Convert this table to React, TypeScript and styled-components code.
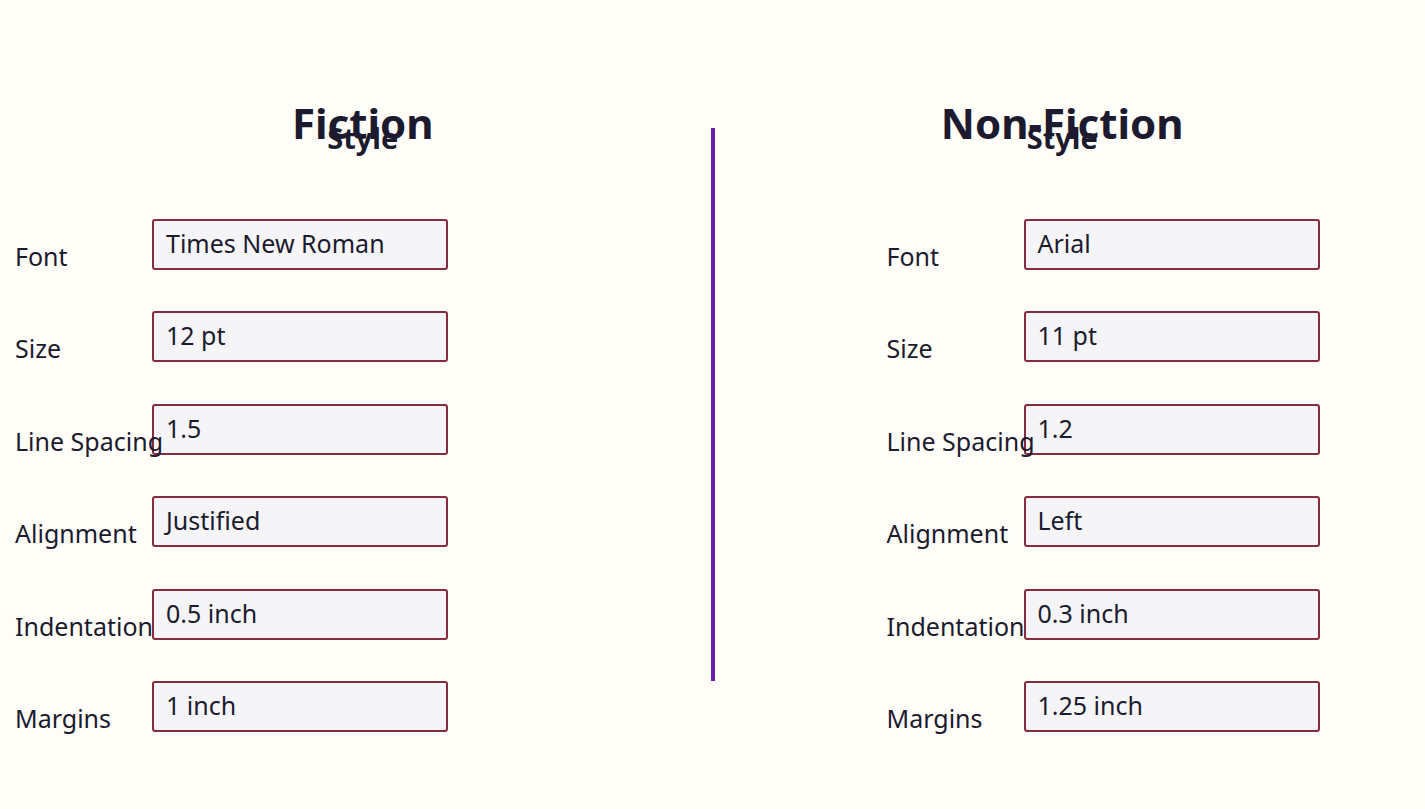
import React from "react";
import styled, { createGlobalStyle } from "styled-components";

interface StyleRow {
  label: string;
  value: string;
}

interface GenreStyle {
  title: string;
  rows: StyleRow[];
}

const genres: GenreStyle[] = [
  {
    title: "Fiction",
    rows: [
      { label: "Font", value: "Times New Roman" },
      { label: "Size", value: "12 pt" },
      { label: "Line Spacing", value: "1.5" },
      { label: "Alignment", value: "Justified" },
      { label: "Indentation", value: "0.5 inch" },
      { label: "Margins", value: "1 inch" },
    ],
  },
  {
    title: "Non-Fiction",
    rows: [
      { label: "Font", value: "Arial" },
      { label: "Size", value: "11 pt" },
      { label: "Line Spacing", value: "1.2" },
      { label: "Alignment", value: "Left" },
      { label: "Indentation", value: "0.3 inch" },
      { label: "Margins", value: "1.25 inch" },
    ],
  },
];

const GlobalStyle = createGlobalStyle`
  * { box-sizing: border-box; }
  body {
    margin: 0;
    background: #fffdf8;
    font-family: "Noto Sans", "Liberation Sans", sans-serif;
    color: #1b1a2e;
  }
`;

const Page = styled.div`
  display: flex;
  min-height: 100vh;
  padding: 0 15px;
  background: #fffdf8;
`;

const Section = styled.section`
  flex: 1;
  display: flex;
  flex-direction: column;
  padding-top: 102px;
`;

const Heading = styled.div`
  display: flex;
  flex-direction: column;
  align-items: center;
`;

const Title = styled.h1`
  margin: 0;
  font-size: 42px;
  line-height: 1;
  font-weight: 700;
`;

const Subtitle = styled.h2`
  margin: -21px 0 0;
  font-size: 29px;
  line-height: 1;
  font-weight: 700;
`;

const Form = styled.div<{ $inset: number }>`
  display: flex;
  flex-direction: column;
  gap: 41.4px;
  margin-top: 67px;
  padding-left: ${(p) => p.$inset}px;
`;

const Row = styled.div`
  display: flex;
  align-items: flex-end;
`;

const Label = styled.label`
  width: 137px;
  flex-shrink: 0;
  margin-bottom: -3px;
  font-size: 25px;
  white-space: nowrap;
  position: relative;
  z-index: 1;
`;

const Field = styled.div`
  width: 296px;
  height: 51px;
  display: flex;
  align-items: center;
  padding: 0 12px 3px;
  border: 2px solid #862c40;
  border-radius: 3px;
  background: #f5f5f7;
  font-size: 25px;
`;

const Divider = styled.div`
  width: 4px;
  height: 553px;
  margin-top: 128px;
  background: #6b1fa8;
  flex-shrink: 0;
`;

function GenreColumn({ genre, inset }: { genre: GenreStyle; inset: number }) {
  return (
    <Section>
      <Heading>
        <Title>{genre.title}</Title>
        <Subtitle>Style</Subtitle>
      </Heading>
      <Form $inset={inset}>
        {genre.rows.map((row) => (
          <Row key={row.label}>
            <Label>{row.label}</Label>
            <Field>{row.value}</Field>
          </Row>
        ))}
      </Form>
    </Section>
  );
}

export default function App() {
  return (
    <>
      <GlobalStyle />
      <Page>
        <GenreColumn genre={genres[0]} inset={0} />
        <Divider />
        <GenreColumn genre={genres[1]} inset={172} />
      </Page>
    </>
  );
}
